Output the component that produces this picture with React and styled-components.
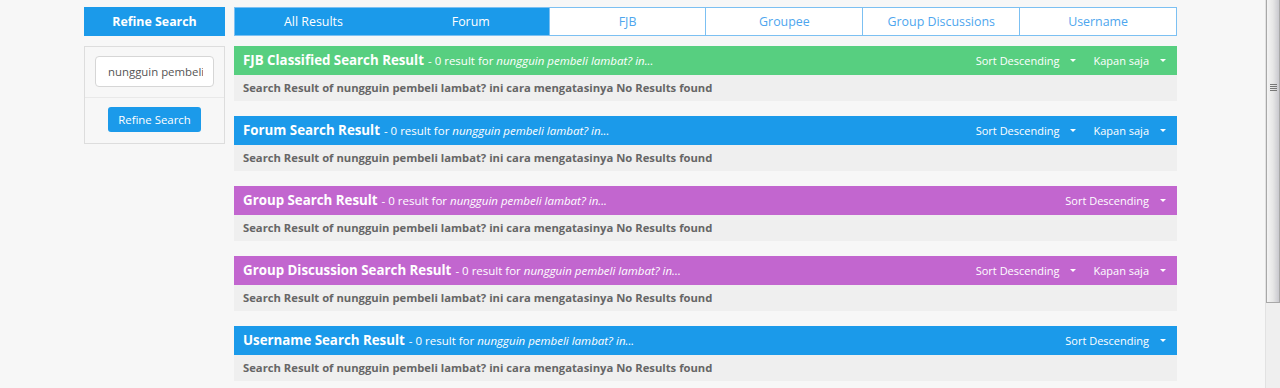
import styled, { createGlobalStyle } from "styled-components";

const colors = {
  page: "#f7f7f7",
  blue: "#1b9aea",
  green: "#57cf80",
  purple: "#c266cf",
  body: "#efefef",
  tabBorder: "#7cc0f2",
  tabText: "#4ea6ee",
  muted: "#666666",
};

const GlobalStyle = createGlobalStyle`
  html, body {
    margin: 0;
    padding: 0;
    background: ${colors.page};
    font-family: "Open Sans", "Noto Sans", sans-serif;
    overflow: hidden;
  }
`;

const query = "nungguin pembeli lambat? ini cara mengatasinya";

const tabs = [
  { label: "All Results", active: true },
  { label: "Forum", active: true },
  { label: "FJB" },
  { label: "Groupee" },
  { label: "Group Discussions" },
  { label: "Username" },
];

const panels = [
  { title: "FJB Classified Search Result", color: colors.green, time: true },
  { title: "Forum Search Result", color: colors.blue, time: true },
  { title: "Group Search Result", color: colors.purple },
  { title: "Group Discussion Search Result", color: colors.purple, time: true },
  { title: "Username Search Result", color: colors.blue },
];

export default function App() {
  return (
    <>
      <GlobalStyle />
      <Page>
        <Sidebar>
          <SideHeader>Refine Search</SideHeader>
          <SideBox>
            <InputRow>
              <SearchInput defaultValue={query} />
            </InputRow>
            <ButtonRow>
              <RefineButton>Refine Search</RefineButton>
            </ButtonRow>
          </SideBox>
        </Sidebar>
        <Main>
          <Tabs>
            {tabs.map((t) => (
              <Tab key={t.label} $active={t.active}>
                {t.label}
              </Tab>
            ))}
          </Tabs>
          {panels.map((p) => (
            <Panel key={p.title}>
              <PanelHeader $color={p.color}>
                <HeaderLeft>
                  <Title>{p.title}</Title>
                  <Count>
                    - 0 result for <em>nungguin pembeli lambat? in...</em>
                  </Count>
                </HeaderLeft>
                <HeaderRight>
                  <Dropdown>
                    Sort Descending <Caret />
                  </Dropdown>
                  {p.time && (
                    <Dropdown>
                      Kapan saja <Caret />
                    </Dropdown>
                  )}
                </HeaderRight>
              </PanelHeader>
              <PanelBody>Search Result of {query} No Results found</PanelBody>
            </Panel>
          ))}
        </Main>
      </Page>
      <Scrollbar>
        <Thumb>
          <Grip />
        </Thumb>
      </Scrollbar>
    </>
  );
}

const Page = styled.div`
  display: flex;
  align-items: flex-start;
  gap: 9px;
  padding: 7px 0 0 84px;
`;

const Sidebar = styled.div`
  width: 141px;
  display: flex;
  flex-direction: column;
  gap: 10px;
`;

const SideHeader = styled.div`
  height: 29px;
  background: ${colors.blue};
  color: #fff;
  font-size: 12.4px;
  font-weight: 700;
  display: flex;
  align-items: center;
  justify-content: center;
`;

const SideBox = styled.div`
  border: 1px solid #dddddd;
  box-sizing: border-box;
  height: 98px;
`;

const InputRow = styled.div`
  padding: 9px 10px 10px 10px;
  border-bottom: 1px solid #e9e9e9;
`;

const SearchInput = styled.input`
  width: 119px;
  height: 31px;
  box-sizing: border-box;
  border: 1px solid #d6d6d6;
  border-radius: 4px;
  background: #fff;
  padding: 0 10px 0 12px;
  font-family: "Open Sans", sans-serif;
  font-size: 11.4px;
  color: #555;
  outline: none;
`;

const ButtonRow = styled.div`
  display: flex;
  justify-content: center;
  padding-top: 9px;
`;

const RefineButton = styled.button`
  width: 93px;
  height: 25px;
  border: none;
  border-radius: 3px;
  background: ${colors.blue};
  color: #fff;
  font-family: "Open Sans", sans-serif;
  font-size: 11.4px;
  padding: 0;
`;

const Main = styled.div`
  width: 943px;
  display: flex;
  flex-direction: column;
  gap: 15px;
`;

const Tabs = styled.div`
  display: grid;
  grid-template-columns: repeat(6, 1fr);
  height: 29px;
  box-sizing: border-box;
  border: 1px solid ${colors.tabBorder};
  margin-bottom: -5px;
`;

const Tab = styled.div`
  display: flex;
  align-items: center;
  justify-content: center;
  font-size: 12.4px;
  background: ${(p) => (p.$active ? colors.blue : "#fff")};
  color: ${(p) => (p.$active ? "#fff" : colors.tabText)};
  border-left: 1px solid ${(p) => (p.$active ? colors.blue : colors.tabBorder)};
  &:first-child {
    border-left: none;
  }
`;

const Panel = styled.div`
  display: flex;
  flex-direction: column;
`;

const PanelHeader = styled.div`
  height: 29px;
  box-sizing: border-box;
  padding: 0 11px 1px 9px;
  background: ${(p) => p.$color};
  color: #fff;
  display: flex;
  align-items: center;
  justify-content: space-between;
  white-space: nowrap;
`;

const HeaderLeft = styled.div`
  display: flex;
  align-items: baseline;
  gap: 4px;
`;

const Title = styled.span`
  font-size: 13.3px;
  font-weight: 700;
`;

const Count = styled.span`
  font-size: 11.5px;
  em {
    font-style: italic;
  }
`;

const HeaderRight = styled.div`
  display: flex;
  align-items: center;
  gap: 17px;
  font-size: 11px;
`;

const Dropdown = styled.span`
  display: flex;
  align-items: center;
  gap: 11px;
`;

const Caret = styled.span`
  width: 0;
  height: 0;
  border-left: 3px solid transparent;
  border-right: 3px solid transparent;
  border-top: 3px solid #fff;
`;

const PanelBody = styled.div`
  height: 26px;
  box-sizing: border-box;
  padding: 0 0 2px 9px;
  background: ${colors.body};
  color: ${colors.muted};
  font-size: 11.25px;
  font-weight: 700;
  display: flex;
  align-items: center;
`;

const Scrollbar = styled.div`
  position: fixed;
  top: 0;
  right: 0;
  width: 14px;
  height: 100%;
  background: #efefef;
  border-left: 1px solid #e2e2e2;
`;

const Thumb = styled.div`
  height: 303px;
  box-sizing: border-box;
  border: 1px solid #a8a8a8;
  border-top: none;
  background: linear-gradient(to right, #f4f4f4, #e6e6e6 50%, #c9c9cf);
  display: flex;
  justify-content: center;
  padding-top: 84px;
`;

const Grip = styled.div`
  width: 7px;
  height: 7px;
  background: repeating-linear-gradient(to bottom, #777 0 1px, transparent 1px 2px);
`;
